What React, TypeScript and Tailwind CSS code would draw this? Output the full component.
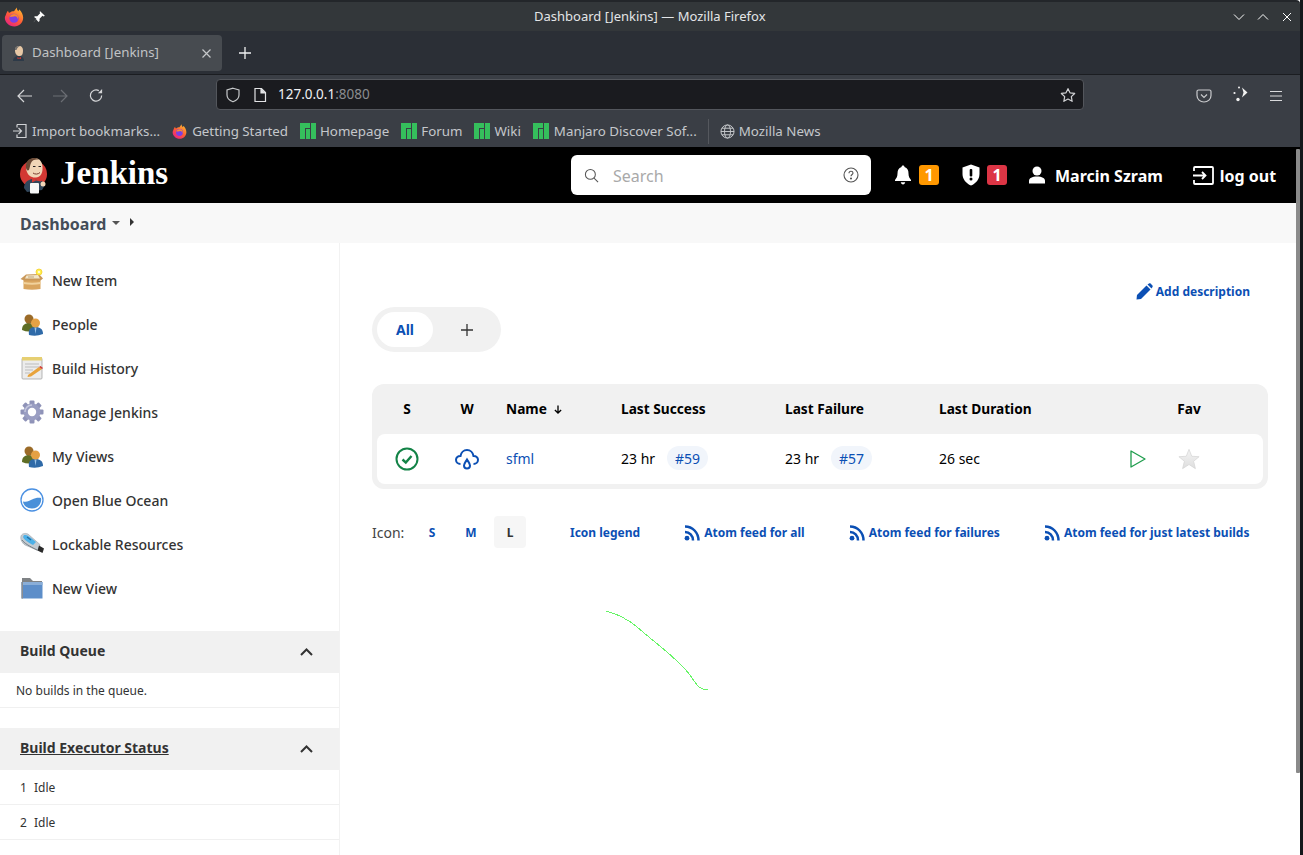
import React from "react";

const sans = "font-['Noto_Sans','Open_Sans',sans-serif]";

function Firefox({ size = 20, id }: { size?: number; id: string }) {
  return (
    <svg width={size} height={size} viewBox="0 0 24 24" className="shrink-0">
      <defs>
        <linearGradient id={id} x1="0.8" y1="0" x2="0.1" y2="1">
          <stop offset="0" stopColor="#ffbd2e" />
          <stop offset="0.5" stopColor="#ff5a36" />
          <stop offset="1" stopColor="#e3198f" />
        </linearGradient>
      </defs>
      <path d="M2 10C3 7 4 5 5 4.500C5 6 5.500 6.800 6.500 7C8 5.500 10 5 12 5C13 3.500 14 2 15.500 0.500C15.300 2.500 16 4 17.500 5C17.500 4 17.800 3.500 18.500 3C21 5.500 23 9 23 13C23 19 18 23.500 12.500 23.500C6 23.500 1 18.500 1 13C1 12 1.500 11 2 10Z" fill={`url(#${id})`} />
      <circle cx="12" cy="13.500" r="5.500" fill="#7b3fe4" />
      <path d="M7 12C8 8.500 12 7.500 15 9C17 10.500 17.500 13 16 15C17 12.500 14.500 10.500 12 11.500C10 12 8.500 12 7 12Z" fill="#ff8a2a" />
    </svg>
  );
}

function Manjaro() {
  return (
    <svg width="16" height="16" viewBox="0 0 16 16" className="shrink-0">
      <path d="M0 0H10V5H5V16H0ZM6 6H10V16H6ZM11 0H16V16H11Z" fill="#35bf5c" />
    </svg>
  );
}

function JenkinsLogo() {
  return (
    <svg width="30" height="37" viewBox="0 0 30 37" className="shrink-0">
      <circle cx="14.500" cy="17" r="13.500" fill="#d33833" />
      <path d="M7 9C8 3 13 0.500 18 1.500C22 2.500 24 7 23.500 12C23.500 17 21 20 17 20.500C12 21 9 18 8 15C7 13 7 11 7 9Z" fill="#f0d6b7" />
      <path d="M7 11C6 5 10 1 15 1C17 1 19 1.500 20 2.500C16 2 13 3 12 6C11 8 11 10 10 13C8.500 14 7.500 13 7 11Z" fill="#6b4a36" />
      <path d="M14 9.500h2.500M19.500 9.500h2.500" stroke="#231f20" strokeWidth="1.200" />
      <path d="M14 16C16 17.500 19 17.500 21 15.500" stroke="#7a3b2e" strokeWidth="1" fill="none" />
      <path d="M5 31C5 26 8 23 13 22L20 23C24 24 26 26 26 28L23 33L8 35Z" fill="#31465a" />
      <path d="M13 20.500L17 22.500L22 19.500L22 24.500L17 23.500L13 25.500Z" fill="#d33833" />
      <rect x="11" y="26" width="9" height="10.500" rx="1" fill="#f7f7f7" />
      <circle cx="24" cy="27" r="2.500" fill="#f0d6b7" />
    </svg>
  );
}

function Box() {
  return (
    <svg width="24" height="24" viewBox="0 0 24 24">
      <path d="M3.500 11H20.500V21Q12 22.500 3.500 21Z" fill="#d9a55f" />
      <path d="M3.500 14Q12 15.500 20.500 14V16Q12 17.500 3.500 16Z" fill="#f1d29c" />
      <path d="M0.500 11L6 6.500L19 6L23 10.500L20.500 12.500H4Z" fill="#c9985a" />
      <path d="M6.500 7.500L18 7L20 10.500H5Z" fill="#f2e5c9" />
      <path d="M8 9H14" stroke="#bda77f" strokeWidth="1" />
      <circle cx="19" cy="4" r="3" fill="#fff04a" stroke="#f4cf30" strokeWidth="0.800" />
      <circle cx="19" cy="4" r="1.200" fill="#fffdd0" />
    </svg>
  );
}

function People() {
  return (
    <svg width="24" height="24" viewBox="0 0 24 24">
      <path d="M2 18C2 13 5 11 9 11C13 11 15 14 15 18Q9 21 2 18Z" fill="#5e6d25" />
      <circle cx="9" cy="7" r="4.500" fill="#9b6b28" />
      <path d="M9 23C8 17 11 15 15.500 15C20 15 23 17 23 22Q16 25 9 23Z" fill="#2f6aa8" />
      <path d="M14.500 15.500H16.500L15.500 22Z" fill="#9cc3e6" />
      <circle cx="15.500" cy="11" r="4.500" fill="#e5a144" />
    </svg>
  );
}

function Notepad() {
  return (
    <svg width="24" height="24" viewBox="0 0 24 24">
      <rect x="2" y="2" width="20" height="21" rx="1" fill="#ececec" stroke="#a5a5a5" strokeWidth="0.800" />
      <rect x="2" y="1" width="20" height="3.500" fill="#e6cf72" />
      <path d="M5 8H19M5 11H19M5 14H13M5 17H10" stroke="#bdbdbd" strokeWidth="1" />
      <path d="M8 19L19 11L22 13L11 20.500L7.500 21Z" fill="#e8a33b" />
      <path d="M19 11L20.500 10L23 12L22 13Z" fill="#d33833" />
    </svg>
  );
}

function Gear() {
  const teeth = [0, 45, 90, 135, 180, 225, 270, 315];
  return (
    <svg width="24" height="24" viewBox="0 0 24 24">
      {teeth.map((a) => (
        <rect key={a} x="9.500" y="0.500" width="5" height="6" rx="1" fill="#8f93b8" transform={`rotate(${a} 12 12)`} />
      ))}
      <circle cx="12" cy="12" r="8.500" fill="#9a9ec2" />
      <circle cx="12" cy="12" r="4.200" fill="#fff" />
      <path d="M5 12A7 7 0 0 1 12 5" stroke="#c5c8de" strokeWidth="1.500" fill="none" />
    </svg>
  );
}

function Ocean() {
  return (
    <svg width="24" height="24" viewBox="0 0 24 24">
      <circle cx="12" cy="12" r="11" fill="#fff" stroke="#4a90e2" strokeWidth="1.300" />
      <path d="M3 13.500C7 14.500 9 13 12 11.500C15 10 18 9.500 21 10C22 14 19 20.500 12 20.500C7 20.500 3.500 17.500 3 13.500Z" fill="#4a90d9" />
    </svg>
  );
}

function Usb() {
  return (
    <svg width="24" height="24" viewBox="0 0 24 24">
      <path d="M1 4C2 1 6 1 8 2L20 12.500L18 18.500L5 13C2 11 0 7 1 4Z" fill="#c3cbd2" stroke="#8e979e" strokeWidth="0.500" />
      <path d="M4 3C6 2.500 9 3.500 16 10L13 13C8 10 4 8 3 5Z" fill="#4db1e8" />
      <path d="M7 5L11 8" stroke="#1f6ea5" strokeWidth="1.300" />
      <path d="M19 13.500L24 16.500L22.500 21L17.500 18.500Z" fill="#2a2a2a" />
      <path d="M2 8C4 11 9 14 17 18" stroke="#62696f" strokeWidth="0.800" fill="none" />
    </svg>
  );
}

function Folder() {
  return (
    <svg width="24" height="24" viewBox="0 0 24 24">
      <path d="M2 2H10L13 5H22V8H2Z" fill="#7f8285" />
      <path d="M1.500 6H22.500V22.500H1.500Z" fill="#5d8ec9" />
      <path d="M1.500 6H22.500V9H1.500Z" fill="#8aaed8" />
      <path d="M1.500 6V22.500H3V6Z" fill="#8b8e91" />
    </svg>
  );
}

function ManjaroMark({ label, gap }: { label: string; gap?: boolean }) {
  return (
    <span className={`flex items-center ${gap ? "gap-[5px]" : "gap-[4px]"}`}>
      <Manjaro />
      <span>{label}</span>
    </span>
  );
}

function BrowserChrome() {
  return (
    <div className={`h-[147px] shrink-0 ${sans}`}>
      <div className="relative flex h-[31px] items-center rounded-tr-[4px] border-t-2 border-[#23262a] bg-[#33373a]">
        <div className="ml-[4px] flex items-center">
          <Firefox size={20} id="ffa" />
        </div>
        <svg width="14" height="14" viewBox="0 0 24 24" className="ml-[8px]">
          <path d="M14 2L22 10L20 11L18 10L13 15L13 19L11 20.500L7 16L3 21L3 20.500L7.500 15L3.500 12L5 10.500H9L14 5.500L13 3.500Z" fill="#fcfcfc" />
        </svg>
        <span className="absolute left-[534px] top-[5px] text-[13px] leading-[18px] text-[#e3e5e7]">Dashboard [Jenkins] — Mozilla Firefox</span>
        <div className="ml-auto mr-[7px] flex items-center gap-[12px]">
          <svg width="12" height="12" viewBox="0 0 12 12" fill="none" stroke="#fcfcfc" strokeWidth="1"><path d="M1 3.500L6 8.500L11 3.500" /></svg>
          <svg width="12" height="12" viewBox="0 0 12 12" fill="none" stroke="#fcfcfc" strokeWidth="1"><path d="M1 8.500L6 3.500L11 8.500" /></svg>
          <svg width="12" height="12" viewBox="0 0 12 12" fill="none" stroke="#fcfcfc" strokeWidth="1"><path d="M2 2L10 10M10 2L2 10" /></svg>
        </div>
      </div>
      <div className="flex h-[44px] items-center border-b border-[#1b1d21] bg-[#2b2f36] pt-[1px]">
        <div className="ml-[2px] flex h-[36px] w-[220px] items-center rounded-[4px] bg-[#474b50] pl-[9px] pr-[10px]">
          <svg width="16" height="16" viewBox="0 0 16 16" className="shrink-0">
            <path d="M4 5C4 2 6 1 8 1C11 1 12 3 12 6C12 9 11 11 8.500 11C6 11 4 9 4 5Z" fill="#e7c8a6" />
            <path d="M4 5C4 2 6 1 9 1C7 2 6 3 5.500 5Z" fill="#6d6d6d" />
            <path d="M2 16C2 13 4 11 8 11C11 11 13 13 13 16Z" fill="#2d3a48" />
            <path d="M6.500 12L8 13L10 12V14L8 13.500L6.500 14Z" fill="#d33833" />
          </svg>
          <span className="ml-[5px] text-[13.33px] text-[#c1c3c5]">Dashboard [Jenkins]</span>
          <svg width="11" height="11" viewBox="0 0 11 11" className="ml-auto" stroke="#c5c7c9" strokeWidth="1.200"><path d="M1.500 1.500L9.500 9.500M9.500 1.500L1.500 9.500" /></svg>
        </div>
        <svg width="14" height="14" viewBox="0 0 14 14" className="ml-[16px]" stroke="#f0f1f2" strokeWidth="1.300"><path d="M7 1V13M1 7H13" /></svg>
      </div>
      <div className="h-[72px] bg-[#3a3e45]">
        <div className="flex h-[39px] items-start">
          <div className="ml-[17px] mt-[13px] flex items-center gap-[21px]">
            <svg width="15" height="14" viewBox="0 0 15 14" fill="none" stroke="#d5d6d8" strokeWidth="1.200"><path d="M15 7H1M7 1L1 7L7 13" /></svg>
            <svg width="15" height="14" viewBox="0 0 15 14" fill="none" stroke="#6b6e74" strokeWidth="1.200"><path d="M0 7H14M8 1L14 7L8 13" /></svg>
            <svg width="15" height="15" viewBox="0 0 16 16" fill="none" stroke="#d5d6d8" strokeWidth="1.300"><path d="M13.500 8A6 6 0 1 1 10.500 2.800" /><path d="M14 1V5.500H9.500" fill="#d5d6d8" stroke="none" /></svg>
          </div>
          <div className="ml-[112px] mt-[4px] flex h-[31px] w-[868px] items-center rounded-[4px] border border-[#53565c] bg-[#1a1b1f] pl-[8px] pr-[7px]">
            <svg width="16" height="16" viewBox="0 0 16 16" fill="none" stroke="#c6c8ca" strokeWidth="1.200"><path d="M8 1.200L14 3V8C14 11 11.500 13.500 8 14.800C4.500 13.500 2 11 2 8V3Z" /></svg>
            <svg width="14" height="16" viewBox="0 0 14 16" fill="none" stroke="#e2e3e5" strokeWidth="1.200" className="ml-[12px]"><path d="M2 1.500H8.500L12.500 5.500V14.500H2Z" /><path d="M8 1.500V6H12.500" fill="#e2e3e5" /></svg>
            <span className="ml-[11px] text-[13.5px] text-[#f0f1f3]">127.0.0.1<span className="text-[#8a8c90]">:8080</span></span>
            <svg width="16" height="16" viewBox="0 0 24 24" fill="none" stroke="#d2d3d5" strokeWidth="1.800" strokeLinejoin="round" className="ml-auto"><path d="M12 2.500L15 8.800L22 9.700L17 14.500L18.200 21.500L12 18L5.800 21.500L7 14.500L2 9.700L9 8.800Z" /></svg>
          </div>
          <div className="ml-[112px] mt-[12px] flex items-center">
            <svg width="16" height="16" viewBox="0 0 16 16" fill="none" stroke="#c9cacd" strokeWidth="1.200"><path d="M2.500 2H13.500C14.300 2 15 2.700 15 3.500V7.500C15 11 12 14 8 14C4 14 1 11 1 7.500V3.500C1 2.700 1.700 2 2.500 2Z" /><path d="M5 6.500L8 9.500L11 6.500" /></svg>
            <svg width="18" height="18" viewBox="0 0 18 18" fill="#f2f2f2" className="ml-[20px] -mt-[1px]">
              <path d="M10 1.500L15.500 6.500L10 11.500L11.500 6.500Z" />
              <circle cx="7" cy="1.500" r="1" /><circle cx="2.500" cy="7" r="1.100" /><circle cx="6" cy="13.500" r="1.700" />
            </svg>
            <svg width="14" height="12" viewBox="0 0 14 12" stroke="#d9dadc" strokeWidth="1.100" className="ml-[19px]"><path d="M1 1.500H13M1 6H13M1 10.500H13" /></svg>
          </div>
        </div>
        <div className="flex h-[33px] items-start pl-[12px] pt-[7px] text-[13.33px] leading-[20px] text-[#c4c7cb]">
          <span className="flex items-center gap-[4px]">
            <svg width="16" height="16" viewBox="0 0 16 16" fill="none" stroke="#d0d2d5" strokeWidth="1.200"><path d="M5 1.500H14V14.500H5V11.500" /><path d="M5 4.500V1.500" /><path d="M1 8H9.500M6.500 5L9.500 8L6.500 11" /></svg>
            Import bookmarks...
          </span>
          <span className="ml-[12px] flex items-center gap-[5px]"><Firefox size={15} id="ffb" />Getting Started</span>
          <span className="ml-[12px]"><ManjaroMark label="Homepage" /></span>
          <span className="ml-[12px]"><ManjaroMark label="Forum" /></span>
          <span className="ml-[12px]"><ManjaroMark label="Wiki" /></span>
          <span className="ml-[12px]"><ManjaroMark label="Manjaro Discover Sof..." gap /></span>
          <span className="ml-[11px] mt-[-2px] h-[25px] w-px bg-[#55585e]" />
          <span className="ml-[11px] flex items-center gap-[4px]">
            <svg width="15" height="15" viewBox="0 0 16 16" fill="none" stroke="#c9cbce" strokeWidth="1"><circle cx="8" cy="8" r="7" /><ellipse cx="8" cy="8" rx="3.200" ry="7" /><path d="M1 8H15M2 4.500H14M2 11.500H14" /></svg>
            Mozilla News
          </span>
        </div>
      </div>
    </div>
  );
}

function Header() {
  return (
    <header className="flex h-[56px] shrink-0 items-center bg-black text-white">
      <div className="ml-[19px] flex w-[149px] items-center">
        <JenkinsLogo />
        <span className="ml-[11px] mb-[3px] font-['Liberation_Serif',serif] text-[33px] font-bold leading-none">Jenkins</span>
      </div>
      <div className="ml-[403px] flex h-[40px] w-[300px] items-center rounded-[6px] bg-white pl-[13px] pr-[12px]">
        <svg width="15" height="15" viewBox="0 0 16 16" fill="none" stroke="#555" strokeWidth="1.100"><circle cx="6.800" cy="6.800" r="5.300" /><path d="M10.700 10.700L15 15" /></svg>
        <span className="ml-[14px] mt-[1px] text-[16px] text-[#a9a9a9]">Search</span>
        <svg width="16" height="16" viewBox="0 0 16 16" fill="none" stroke="#555" strokeWidth="1.100" className="ml-auto"><circle cx="8" cy="8" r="7" /><path d="M6 6.300C6 5 7 4.300 8 4.300C9.200 4.300 10 5 10 6.100C10 7.500 8 7.500 8 9.300" /><circle cx="8" cy="11.500" r="0.500" fill="#555" /></svg>
      </div>
      <svg width="18" height="20" viewBox="0 0 18 20" fill="#fff" className="ml-[23px]"><path d="M9 0.500C10 0.500 10.500 1.200 10.500 2C13.500 2.800 14.500 5.500 14.500 8.500C14.500 11.500 15.500 13 17 15V16H1V15C2.500 13 3.500 11.500 3.500 8.500C3.500 5.500 4.500 2.800 7.500 2C7.500 1.200 8 0.500 9 0.500Z" /><path d="M6.800 17.300H11.200C11 18.600 10 19.500 9 19.500C8 19.500 7 18.600 6.800 17.300Z" /></svg>
      <span className="ml-[7px] flex h-[20px] w-[20px] items-center justify-center rounded-[3px] bg-[#ff9800] text-[16px] font-bold">1</span>
      <svg width="18" height="22" viewBox="0 0 18 22" className="ml-[23px]"><path d="M9 0.500L17.500 3.500V10C17.500 15 14 19.500 9 21.500C4 19.500 0.500 15 0.500 10V3.500Z" fill="#fff" /><rect x="7.700" y="5" width="2.600" height="7.500" rx="1" fill="#000" /><circle cx="9" cy="15" r="1.500" fill="#000" /></svg>
      <span className="ml-[7px] flex h-[20px] w-[20px] items-center justify-center rounded-[3px] bg-[#dc3545] text-[16px] font-bold">1</span>
      <svg width="18" height="18" viewBox="0 0 18 18" fill="#fff" className="ml-[21px]"><circle cx="9" cy="5" r="4.500" /><path d="M1 17.500V15C1 12 4 10.500 9 10.500C14 10.500 17 12 17 15V17.500Z" /></svg>
      <span className="ml-[9px] mt-[1px] text-[16px] font-bold">Marcin Szram</span>
      <svg width="21" height="19" viewBox="0 0 21 19" fill="none" stroke="#fff" strokeWidth="1.800" className="ml-[30px]"><path d="M1 5V2C1 1.400 1.400 1 2 1H19C19.600 1 20 1.400 20 2V17C20 17.600 19.600 18 19 18H2C1.400 18 1 17.600 1 17V14" /><path d="M0 9.500H12M9 6L12.500 9.500L9 13" /></svg>
      <span className="ml-[6px] mt-[1px] text-[16px] font-bold">log out</span>
    </header>
  );
}

function SideItem({ icon, label }: { icon: React.ReactNode; label: string }) {
  return (
    <div className="flex h-[44px] items-center pl-[20px]">
      <span className="flex h-[24px] w-[24px] items-center justify-center">{icon}</span>
      <span className="ml-[8px] text-[14px] font-medium text-[#333]">{label}</span>
    </div>
  );
}

function PanelHead({ title, underline }: { title: string; underline?: boolean }) {
  return (
    <div className="flex h-[42px] items-center justify-between bg-[#f1f1f1] pl-[20px] pr-[26px]">
      <span className={`mb-[4px] text-[14px] font-bold text-[#333] ${underline ? "underline" : ""}`}>{title}</span>
      <svg width="13" height="8" viewBox="0 0 13 8" fill="none" stroke="#333" strokeWidth="2"><path d="M1 7L6.500 1.500L12 7" /></svg>
    </div>
  );
}

function Sidebar() {
  return (
    <aside className="w-[340px] shrink-0 border-r border-[#f2f2f2]">
      <div className="pt-[15px]">
        <SideItem icon={<Box />} label="New Item" />
        <SideItem icon={<People />} label="People" />
        <SideItem icon={<Notepad />} label="Build History" />
        <SideItem icon={<Gear />} label="Manage Jenkins" />
        <SideItem icon={<People />} label="My Views" />
        <SideItem icon={<Ocean />} label="Open Blue Ocean" />
        <SideItem icon={<Usb />} label="Lockable Resources" />
        <SideItem icon={<Folder />} label="New View" />
      </div>
      <div className="mt-[21px]">
        <PanelHead title="Build Queue" />
        <div className="flex h-[35px] items-center border-b border-[#f0f0f0] pl-[16px] pt-[2px] text-[12px] text-[#333]">No builds in the queue.</div>
      </div>
      <div className="mt-[20px]">
        <PanelHead title="Build Executor Status" underline />
        <div className="flex h-[35px] items-center border-b border-[#f0f0f0] pl-[20px] pt-[2px] text-[12px] text-[#333]"><span className="w-[14px]">1</span>Idle</div>
        <div className="flex h-[35px] items-center border-b border-[#f0f0f0] pl-[20px] pt-[2px] text-[12px] text-[#333]"><span className="w-[14px]">2</span>Idle</div>
      </div>
    </aside>
  );
}

function Rss() {
  return (
    <svg width="16" height="16" viewBox="0 0 16 16" fill="none" stroke="#0b4fb4" strokeWidth="2.500" className="shrink-0">
      <path d="M1 1.500C8.500 1.500 14.500 7.500 14.500 15.500" />
      <path d="M1 7C5.500 7 9 10.500 9 15.500" />
      <circle cx="3" cy="13.200" r="2.400" fill="#0b4fb4" stroke="none" />
    </svg>
  );
}

function Main() {
  const linkBold = "text-[12px] font-bold text-[#0b4fb4]";
  const th = "text-[13.7px] font-bold text-black";
  const grid = "grid grid-cols-[60px_60px_115px_164px_154px_182px_51px_52px] items-center";
  const build = "ml-[12px] flex h-[24px] w-[41px] items-center justify-center rounded-full bg-[#f1f5fb] text-[#0b4fb4]";
  return (
    <main className="relative flex-1 pl-[32px] pr-[32px]">
      <div className="mt-[33px] flex h-[30px] items-center justify-end pr-[18px]">
        <svg width="17" height="17" viewBox="0 0 17 17" fill="#0b4fb4"><path d="M0.500 16.500L1 12L10.500 2.500L14.500 6.500L5 16Z" /><path d="M11.500 1.500L13 0.500C13.500 0.200 14 0.200 14.500 0.500L16.500 2.500C16.800 3 16.800 3.500 16.500 4L15.500 5.500Z" /></svg>
        <span className={`ml-[3px] mt-[2px] ${linkBold}`}>Add description</span>
      </div>
      <div className="mt-[1px] flex h-[45px] w-[129px] items-center rounded-full bg-[#f1f1f1] pl-[5px]">
        <span className="flex h-[35px] w-[56px] items-center justify-center rounded-full bg-white text-[14px] font-bold text-[#0b4fb4]">All</span>
        <svg width="12" height="12" viewBox="0 0 12 12" stroke="#333" strokeWidth="1.300" className="ml-[28px]"><path d="M6 0V12M0 6H12" /></svg>
      </div>
      <div className="mt-[32px] rounded-[12px] bg-[#f1f1f1] px-[5px] pb-[5px]">
        <div className={`${grid} h-[50px] ${th}`}>
          <span className="text-center">S</span>
          <span className="text-center">W</span>
          <span className="flex items-center pl-[9px]">Name<svg width="8" height="9" viewBox="0 0 9 10" fill="none" stroke="#000" strokeWidth="1.500" className="ml-[7px] mt-[2px]"><path d="M4.500 0.500V9M1 5.500L4.500 9L8 5.500" /></svg></span>
          <span className="pl-[9px]">Last Success</span>
          <span className="pl-[9px]">Last Failure</span>
          <span className="pl-[9px]">Last Duration</span>
          <span />
          <span className="text-center">Fav</span>
        </div>
        <div className={`${grid} h-[50px] rounded-[8px] bg-white pb-[2px] text-[14px] text-black`}>
          <span className="mt-[2px] flex justify-center">
            <svg width="24" height="24" viewBox="0 0 24 24" fill="none" stroke="#138347" strokeWidth="2"><circle cx="12" cy="12" r="10.500" /><path d="M7.500 12.500L10.800 15.500L16.500 9" strokeWidth="2.400" /></svg>
          </span>
          <span className="mt-[2px] flex justify-center">
            <svg width="24" height="24" viewBox="0 0 24 24" fill="none" stroke="#0b4fb4" strokeWidth="2"><path d="M5.500 17C3 17 1 15.200 1 12.800C1 10.500 3 8.800 5.500 9C6 5.500 8.800 3 12 3C15.200 3 18 5.500 18.500 9C21 8.800 23 10.500 23 12.800C23 15.200 21 17 18.500 17" /><path d="M12 12.500C13.500 15 15 16.500 15 18.500C15 20.200 13.700 21.500 12 21.500C10.300 21.500 9 20.200 9 18.500C9 16.500 10.500 15 12 12.500Z" /></svg>
          </span>
          <span className="pl-[9px] text-[#0b4fb4]">sfml</span>
          <span className="flex items-center pl-[9px]">23 hr<span className={build}>#59</span></span>
          <span className="flex items-center pl-[9px]">23 hr<span className={build}>#57</span></span>
          <span className="pl-[9px]">26 sec</span>
          <span className="mt-[2px] flex justify-center">
            <svg width="16" height="18" viewBox="0 0 16 18" fill="none" stroke="#1f9d4d" strokeWidth="1.300" strokeLinejoin="round"><path d="M1 1V17L15 9Z" /></svg>
          </span>
          <span className="mt-[2px] flex justify-center">
            <svg width="22" height="22" viewBox="0 0 24 24" stroke="#d4d4d4" strokeWidth="0.800" strokeLinejoin="round">
              <defs><linearGradient id="star" x1="0" y1="0" x2="0" y2="1"><stop offset="0" stopColor="#f4f4f4" /><stop offset="1" stopColor="#dedede" /></linearGradient></defs>
              <path d="M12 1.500L15 9L23 9.500L17 14.500L19 22.500L12 18L5 22.500L7 14.500L1 9.500L9 9Z" fill="url(#star)" />
            </svg>
          </span>
        </div>
      </div>
      <div className="mt-[27px] flex h-[32px] items-center">
        <span className="w-[44px] text-[14px] text-[#444]">Icon:</span>
        <span className={`flex h-[32px] w-[32px] items-center justify-center pt-[1px] ${linkBold}`}>S</span>
        <span className={`ml-[7px] flex h-[32px] w-[32px] items-center justify-center pt-[1px] ${linkBold}`}>M</span>
        <span className="ml-[7px] flex h-[32px] w-[32px] items-center justify-center rounded-[4px] bg-[#f6f6f6] pt-[1px] text-[12px] font-bold text-[#333]">L</span>
        <span className={`ml-[44px] pt-[1px] ${linkBold}`}>Icon legend</span>
        <span className={`ml-[44px] flex items-center gap-[4px] pt-[1px] ${linkBold}`}><Rss />Atom feed for all</span>
        <span className={`ml-[44px] flex items-center gap-[4px] pt-[1px] ${linkBold}`}><Rss />Atom feed for failures</span>
        <span className={`ml-[44px] flex items-center gap-[4px] pt-[1px] ${linkBold}`}><Rss />Atom feed for just latest builds</span>
      </div>
      <svg width="110" height="85" viewBox="0 0 110 85" fill="none" stroke="#66f566" strokeWidth="1" shapeRendering="crispEdges" className="absolute left-[265px] top-[367px]">
        <path d="M1 1C8 3 16 6 22 10C28 13 32 17 38 22C46 29 54 35 62 42C70 49 78 56 85 65C88 69 90 73 93 76C96 79 99 80 103 79.500" />
      </svg>
    </main>
  );
}

export default function App() {
  return (
    <div className={`relative flex h-[855px] w-[1303px] overflow-hidden bg-[#14181b] ${sans}`}>
      <div className="flex h-[855px] w-[1300px] flex-col bg-white">
        <BrowserChrome />
        <Header />
        <div className="flex h-[40px] shrink-0 items-center bg-[#f8f8f8] pl-[20px]">
          <span className="mt-[2px] text-[16px] font-bold text-[#444d59]">Dashboard</span>
          <svg width="8" height="4" viewBox="0 0 8 4" fill="#555" className="ml-[6px]"><path d="M0 0H8L4 4Z" /></svg>
          <svg width="4" height="8" viewBox="0 0 4 8" fill="#333" className="ml-[10px] -mt-[2px]"><path d="M0 0L4 4L0 8Z" /></svg>
        </div>
        <div className="flex min-h-0 flex-1">
          <Sidebar />
          <Main />
        </div>
      </div>
      <div className="absolute left-[1296px] top-[149px] h-[624px] w-[4px] rounded-[1px] bg-[#8a8a8a]" />
    </div>
  );
}
